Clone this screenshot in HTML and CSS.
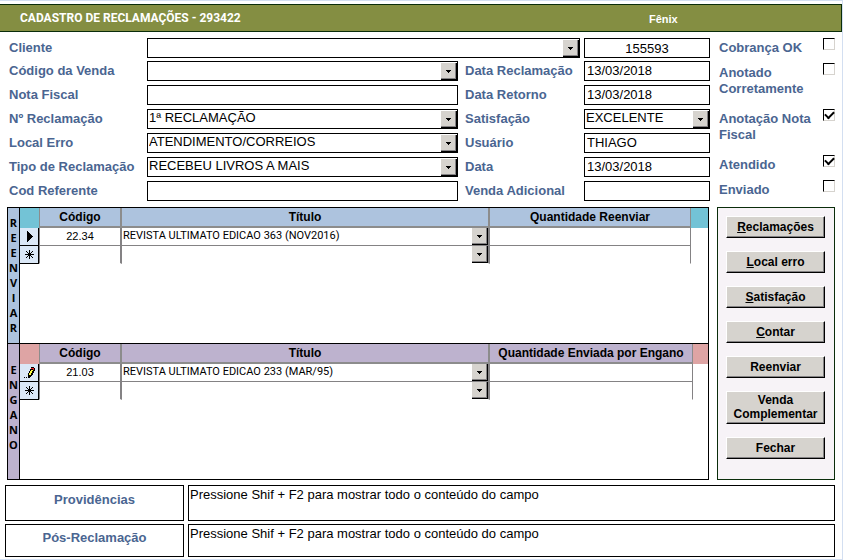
FILE: index.html
```html
<!DOCTYPE html>
<html lang="pt-BR">
<head>
<meta charset="utf-8">
<title>Cadastro de Reclamações</title>
<link rel="stylesheet" href="styles.css">
</head>
<body>
<svg class="defs" width="0" height="0" aria-hidden="true">
  <symbol id="down" viewBox="0 0 5 3"><path d="M0 0h5v1h-1v1h-1v1h-1v-1h-1v-1h-1z"/></symbol>
  <symbol id="star" viewBox="0 0 9 9"><path d="M4 0h1v9h-1zM0 4h9v1h-9zM1 1h1v1h1v1h1v1h-1v-1h-1v-1h-1zM7 1h1v1h-1v1h-1v1h-1v-1h1v-1h1zM3 5h1v1h-1v1h-1v1h-1v-1h1v-1h1zM5 5h1v1h1v1h1v1h-1v-1h-1v-1h-1z"/></symbol>
</svg>
<main class="form">
  <header class="title-bar"><h1>CADASTRO DE RECLAMAÇÕES - 293422</h1><span class="system">Fênix</span></header>

  <div class="top">
    <div class="fields">
      <div class="client">
        <label for="cliente">Cliente</label>
        <span class="combo"><select id="cliente"><option></option></select><span class="arrow"><svg><use href="#down"/></svg></span></span>
        <input class="box code" aria-label="Código do cliente" value="155593">
      </div>
      <div class="columns">
        <div class="pairs">
          <label for="venda">Código da Venda</label>
          <span class="combo"><select id="venda"><option></option></select><span class="arrow"><svg><use href="#down"/></svg></span></span>
          <label for="nota">Nota Fiscal</label>
          <input class="box" id="nota">
          <label for="numero">Nº Reclamação</label>
          <span class="combo"><select id="numero"><option>1ª RECLAMAÇÃO</option></select><span class="arrow"><svg><use href="#down"/></svg></span></span>
          <label for="local">Local Erro</label>
          <span class="combo"><select id="local"><option>ATENDIMENTO/CORREIOS</option></select><span class="arrow"><svg><use href="#down"/></svg></span></span>
          <label for="tipo">Tipo de Reclamação</label>
          <span class="combo"><select id="tipo"><option>RECEBEU LIVROS A MAIS</option></select><span class="arrow"><svg><use href="#down"/></svg></span></span>
          <label for="cod">Cod Referente</label>
          <input class="box" id="cod">
        </div>
        <div class="pairs details">
          <label for="datarec">Data Reclamação</label>
          <input class="box" id="datarec" value="13/03/2018">
          <label for="dataret">Data Retorno</label>
          <input class="box" id="dataret" value="13/03/2018">
          <label for="satisf">Satisfação</label>
          <span class="combo"><select id="satisf"><option>EXCELENTE</option></select><span class="arrow"><svg><use href="#down"/></svg></span></span>
          <label for="usuario">Usuário</label>
          <input class="box" id="usuario" value="THIAGO">
          <label for="data">Data</label>
          <input class="box" id="data" value="13/03/2018">
          <label for="adicional">Venda Adicional</label>
          <input class="box" id="adicional">
        </div>
      </div>
    </div>
    <div class="checks">
      <label>Cobrança OK<input type="checkbox"></label>
      <label class="tall">Anotado<br>Corretamente<input type="checkbox"></label>
      <label class="tall">Anotação Nota<br>Fiscal<input type="checkbox" checked></label>
      <label>Atendido<input type="checkbox" checked></label>
      <label>Enviado<input type="checkbox"></label>
    </div>
  </div>

  <div class="middle">
    <div class="subforms">
      <section class="subform resend">
        <h2 aria-label="REENVIAR"><span>R</span><span>E</span><span>E</span><span>N</span><span>V</span><span>I</span><span>A</span><span>R</span></h2>
        <table>
          <colgroup><col class="c-sel"><col class="c-code"><col><col class="c-qty"><col class="c-end"></colgroup>
          <thead><tr><th class="corner"></th><th>Código</th><th>Título</th><th>Quantidade Reenviar</th><th class="corner"></th></tr></thead>
          <tbody>
            <tr><td class="sel"><svg class="icon" viewBox="0 0 13 13"><path d="M4 1h1v1h1v1h1v1h1v1h1v1h1v1h-1v1h-1v1h-1v1h-1v1h-1v1h-1z"/></svg></td><td class="num">22.34</td><td class="title"><span class="combo"><select aria-label="Título"><option>REVISTA ULTIMATO EDICAO 363 (NOV2016)</option></select><span class="arrow"><svg><use href="#down"/></svg></span></span></td><td></td><td class="end"></td></tr>
            <tr><td class="sel"><svg class="star"><use href="#star"/></svg></td><td></td><td class="title"><span class="combo"><select aria-label="Novo título"><option></option></select><span class="arrow"><svg><use href="#down"/></svg></span></span></td><td></td><td class="end"></td></tr>
          </tbody>
        </table>
      </section>
      <section class="subform mistake">
        <h2 aria-label="ENGANO"><span>E</span><span>N</span><span>G</span><span>A</span><span>N</span><span>O</span></h2>
        <table>
          <colgroup><col class="c-sel"><col class="c-code"><col><col class="c-qty"><col class="c-end"></colgroup>
          <thead><tr><th class="corner"></th><th>Código</th><th>Título</th><th>Quantidade Enviada por Engano</th><th class="corner"></th></tr></thead>
          <tbody>
            <tr><td class="sel"><svg class="icon" viewBox="0 0 13 13"><path d="M1 11h1v1h-1zM3 11h1v1h-1zM5 7h1v-2h1v-2h1v-2h3v1h1v3h-1v2h-1v2h-1v1h-1v1h-1v1h-2z"/><path fill="#ffff40" d="M6 7h1v-2h1v-1h2v1h-1v2h-1v2h-2z"/><path fill="#e02020" d="M8 2h3v2h-1v-1h-2z"/></svg></td><td class="num">21.03</td><td class="title"><span class="combo"><select aria-label="Título"><option>REVISTA ULTIMATO EDICAO 233 (MAR/95)</option></select><span class="arrow"><svg><use href="#down"/></svg></span></span></td><td></td><td class="end"></td></tr>
            <tr><td class="sel"><svg class="star"><use href="#star"/></svg></td><td></td><td class="title"><span class="combo"><select aria-label="Novo título"><option></option></select><span class="arrow"><svg><use href="#down"/></svg></span></span></td><td></td><td class="end"></td></tr>
          </tbody>
        </table>
      </section>
    </div>
    <nav class="actions">
      <button><u>R</u>eclamações</button>
      <button><u>L</u>ocal erro</button>
      <button><u>S</u>atisfação</button>
      <button><u>C</u>ontar</button>
      <button>Reenviar</button>
      <button>Venda<br>Complementar</button>
      <button>Fechar</button>
    </nav>
  </div>

  <div class="notes">
    <label for="prov">Providências</label>
    <textarea id="prov">Pressione Shif + F2 para mostrar todo o conteúdo do campo</textarea>
    <label for="pos">Pós-Reclamação</label>
    <textarea id="pos">Pressione Shif + F2 para mostrar todo o conteúdo do campo</textarea>
  </div>
</main>
</body>
</html>
```
FILE: styles.css
```css
* { box-sizing: border-box; }
body { margin: 0; background: #fff; color: #000; font: 13px/16px "Liberation Sans", Arial, sans-serif; }
.defs { display: block; }
.form { border: 1px solid #d3dff1; border-left: 0; padding-top: 3px; min-height: 100vh; }
input, select, textarea, button { font: inherit; color: inherit; border-radius: 0; margin: 0; }

.title-bar { display: flex; align-items: center; height: 28px; padding-left: 20px; background: #848e42; border: 1px solid #0a2d0a; border-left: 0; color: #fff; }
h1 { flex: 1; margin: 0; font: bold 12px/16px Roboto, "Liberation Sans", sans-serif; }
.system { width: 192px; padding-top: 2px; font-size: 11px; font-weight: bold; }

.top { display: flex; gap: 9px; padding: 6px 7px 0 9px; }
.fields { flex: 1; min-width: 0; }
label { color: #4a6591; font-weight: bold; white-space: nowrap; }
.client { display: grid; grid-template-columns: 138px minmax(0, 1fr) 126px; align-items: center; margin-bottom: 3px; }
.columns { display: grid; grid-template-columns: minmax(0, 1fr) 245px; gap: 7px; }
.pairs { display: grid; grid-template-columns: 138px minmax(0, 1fr); grid-auto-rows: 20px; row-gap: 4px; align-items: center; }
.details { grid-template-columns: 119px minmax(0, 1fr); }
.box, .combo { width: 100%; height: 20px; border: 1px solid #000; background: #fff; }
.box { padding: 0 2px 2px; }
.code { text-align: center; padding-bottom: 0; }

.combo { position: relative; display: block; }
.client .combo { width: auto; margin-right: 4px; }
.combo select { display: block; width: 100%; height: 100%; padding: 0 18px 2px 1px; border: 0; background: none; appearance: none; }
.arrow { position: absolute; top: 1px; right: 0; bottom: 0; width: 16px; display: flex; align-items: center; justify-content: center; background: #d6d3ce; border: solid #000; border-width: 0 1px 1px 0; box-shadow: inset -1px -1px #848284; pointer-events: none; }
.arrow svg { width: 5px; height: 3px; }

.checks { width: 116px; display: flex; flex-direction: column; }
.checks label { position: relative; display: block; height: 25px; padding-top: 2px; }
.checks .tall { height: 46px; }
.checks label:last-child { height: 20px; }
.checks input { position: absolute; top: 0; right: 0; width: 12px; height: 12px; appearance: none; background: #fff; border: 1px solid; border-color: #000 #d6d3ce #d6d3ce #000; outline: 0; }
.checks input:checked::after { content: ""; display: block; width: 7px; height: 4px; margin: 1px 0 0 1px; border: solid #000; border-width: 0 0 2px 2px; transform: rotate(-45deg); }

.middle { display: flex; gap: 8px; padding: 6px 7px 0; }
.subforms { flex: 1; min-width: 0; border: 1px solid #000; }
.subform { display: flex; min-height: 135px; }
.subform + .subform { border-top: 1px solid #000; min-height: 136px; }
h2 { width: 12px; flex: none; margin: 0; border-right: 1px solid #000; font: bold 11px/15px "Open Sans", sans-serif; display: flex; flex-direction: column; align-items: center; padding-top: 7px; }
.mistake h2 { padding-top: 18px; }
.resend h2, .resend th { background: #adc3de; }
.mistake h2, .mistake th { background: #bdb2ce; }
.subform table { flex: 1; align-self: flex-start; width: 100%; min-width: 0; table-layout: fixed; border-collapse: separate; border-spacing: 0; }
.c-sel { width: 19px; }
.c-code { width: 83px; }
.c-qty { width: 201px; }
.c-end { width: 17px; }
.mistake .c-qty { width: 203px; }
.mistake .c-end { width: 15px; }
th { height: 20px; padding: 0; font-size: 12px; line-height: 16px; border: solid #8c8c8c; border-width: 0 2px 2px 0; white-space: nowrap; }
th:nth-child(2) { border-left-width: 1px; }
th:nth-child(4) { border-right-width: 1px; }
th.corner { border-right: 0; }
.resend .corner { background: #73c3d6; border-bottom-color: #73c3d6; }
.mistake .corner { background: #dea4a4; border-bottom-color: #dea4a4; }
td { height: 18px; padding: 0; font-size: 11px; line-height: 14px; border: solid #848284; border-width: 0 1px 1px 0; }
tr:last-child td { border-bottom-color: transparent; }
td:nth-child(2) { border-right-width: 2px; border-left-width: 1px; }
td.num { text-align: center; padding-bottom: 2px; }
td.title { border-right-width: 2px; font-family: Roboto, "Liberation Sans", sans-serif; }
td.end { border: 0; }
td.sel, tr:last-child td.sel { background: #dbe8f7; border: solid #000; border-width: 0 1px 1px 0; }
.sel svg { display: block; margin: auto; }
.icon { width: 13px; height: 13px; }
.star { width: 9px; height: 9px; }
td .combo { height: 17px; border: 0; }
td .arrow { top: 0; }

.actions { width: 118px; display: flex; flex-direction: column; gap: 13px; padding: 8px 9px 8px 8px; background: #f7f3f7; border: 1px solid #0a2d0a; }
button { min-height: 22px; padding: 1px 0 2px; background: #d6d3ce; border: 1px solid; border-color: #fff #000 #000 #fff; box-shadow: inset -1px -1px #848284; font-size: 12px; font-weight: bold; line-height: 14px; }

.notes { display: grid; grid-template-columns: 179px 1fr; grid-template-rows: 36px 33px; gap: 3px 4px; padding: 5px 7px 0 5px; }
.notes label { display: flex; align-items: center; justify-content: center; padding-bottom: 6px; border: 1px solid #000; }
.notes textarea { padding: 1px; border: 1px solid #000; resize: none; overflow: hidden; }
```
